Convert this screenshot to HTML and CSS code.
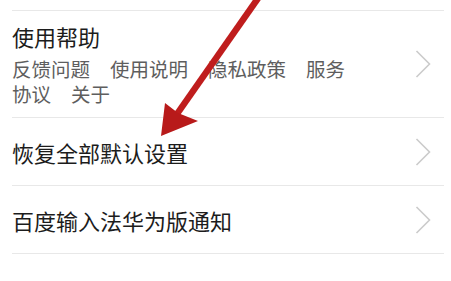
FILE: index.html
```html
<!DOCTYPE html>
<html>
<head>
    <meta charset="utf-8">
    <title>设置</title>
    <link rel="stylesheet" href="styles.css">
</head>
<body>
    <div class="list">
        <div class="row row-help">
            <div class="row-text">
                <div class="title">使用帮助</div>
                <div class="links"><span class="link">反馈问题</span><span class="link">使用说明</span><span class="link">隐私政策</span><span>服务</span><span class="link">协议</span><span class="link">关于</span></div>
            </div>
            <svg class="chevron" viewBox="0 0 16 28" width="16" height="28"><path d="M1.5 1 L14.5 14 L1.5 27" fill="none" stroke="#cbcbcb" stroke-width="1.6"/></svg>
        </div>
        <div class="row">
            <div class="row-text"><div class="title">恢复全部默认设置</div></div>
            <svg class="chevron" viewBox="0 0 16 28" width="16" height="28"><path d="M1.5 1 L14.5 14 L1.5 27" fill="none" stroke="#cbcbcb" stroke-width="1.6"/></svg>
        </div>
        <div class="row">
            <div class="row-text"><div class="title">百度输入法华为版通知</div></div>
            <svg class="chevron" viewBox="0 0 16 28" width="16" height="28"><path d="M1.5 1 L14.5 14 L1.5 27" fill="none" stroke="#cbcbcb" stroke-width="1.6"/></svg>
        </div>
    </div>

    <!-- red annotation arrow drawn on top of the screenshot -->
    <svg class="pointer" viewBox="0 0 451 281" width="451" height="281">
        <line x1="261" y1="-6" x2="177" y2="114" stroke="#bf1d1d" stroke-width="6.5"/>
        <polygon points="161,136 165,103 178,113 198,121" fill="#b81a1a"/>
    </svg>
</body>
</html>
```

FILE: styles.css
```css
body {
    margin: 0;
    padding-top: 10px;
    background: #fff;
    font-family: "Noto Sans CJK SC", "Noto Sans", sans-serif;
    color: #1c1c1c;
    position: relative;
    overflow: hidden;
}
.list {
    margin: 0 7px 0 12px;
}
.row {
    display: flex;
    align-items: center;
    height: 67px;
    border-top: 1px solid #e8e8e8;
}
.row:last-child {
    border-bottom: 1px solid #e8e8e8;
}
.row-help {
    height: auto;
    padding: 10px 0 11px;
}
.row-text {
    flex: 1;
}
.title {
    font-size: 22px;
    line-height: 30px;
}
.links {
    width: 350px;
    margin-top: 5px;
    font-size: 19.5px;
    line-height: 25px;
    color: #5e5e5e;
}
.link {
    margin-right: 20px;
}
.chevron {
    margin-right: 13px;
    flex-shrink: 0;
}
.pointer {
    position: absolute;
    left: 0;
    top: 0;
}
```
